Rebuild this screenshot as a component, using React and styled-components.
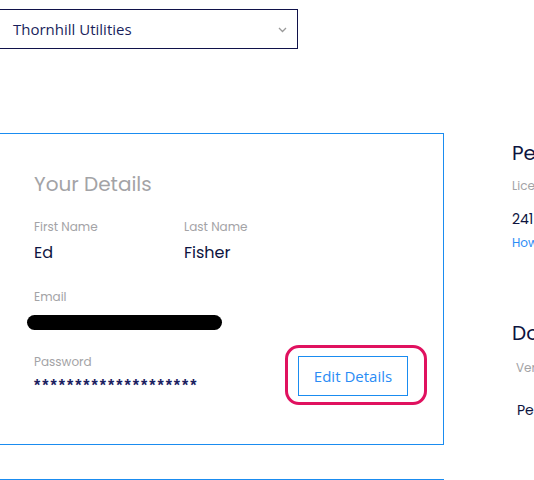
import React from "react";
import styled, { createGlobalStyle } from "styled-components";

const Global = createGlobalStyle`
  html, body { margin: 0; padding: 0; background: #fff; }
  body { font-family: "Open Sans", "Liberation Sans", sans-serif; overflow: hidden; }
`;

const Page = styled.div`
  width: 536px;
  height: 480px;
  overflow: hidden;
  display: flex;
  flex-direction: column;
  margin-left: -2px;
  & > * { flex-shrink: 0; }
`;

const SelectBox = styled.div`
  margin-top: 9px;
  width: 300px;
  height: 40px;
  box-sizing: border-box;
  border: 1px solid #10124a;
  display: flex;
  align-items: center;
  justify-content: space-between;
  padding: 0 10px 0 14px;
  font-family: "Open Sans", sans-serif;
  font-size: 15px;
  color: #1a1f5c;
`;

const Chevron = styled.svg`
  width: 9px;
  height: 6px;
  margin-top: 2px;
`;

const Columns = styled.div`
  margin-top: 84px;
  display: grid;
  grid-template-columns: 446px 1fr;
  column-gap: 68px;
`;

const LeftCol = styled.div`
  display: flex;
  flex-direction: column;
  gap: 34px;
`;

const Card = styled.div`
  box-sizing: border-box;
  border: 1px solid #1a8cf0;
  height: ${(p) => p.$h}px;
  padding: 38px 0 0 35px;
  font-family: "Poppins", "Lato", sans-serif;
`;

const Heading = styled.div`
  font-size: 20px;
  color: #a3a3a6;
  line-height: 24px;
  margin-bottom: 23px;
`;

const FieldRow = styled.div`
  display: grid;
  grid-template-columns: 150px 150px;
  margin-bottom: 26px;
`;

const Field = styled.div`
  display: flex;
  flex-direction: column;
`;

const Label = styled.div`
  font-size: 12px;
  line-height: 16px;
  color: #a3a3a6;
  margin-bottom: ${(p) => p.$mb ?? 8}px;
`;

const Value = styled.div`
  font-size: 16px;
  line-height: 20px;
  color: #0d1440;
`;

const Redaction = styled.div`
  margin-left: -7px;
  width: 195px;
  height: 15px;
  background: #000;
  border-radius: 8px;
  margin-bottom: 24px;
`;

const BottomRow = styled.div`
  display: flex;
  justify-content: space-between;
  align-items: flex-start;
  padding-right: 16px;
`;

const Stars = styled.div`
  font-family: "Liberation Sans", sans-serif;
  font-size: 16px;
  font-weight: 700;
  letter-spacing: 2px;
  line-height: 16px;
  color: #1a2060;
  margin-top: 2px;
`;

const Highlight = styled.div`
  margin-top: -9px;
  border: 3px solid #e0115f;
  border-radius: 14px;
  padding: 8px 16px 6px 10px;
`;

const EditButton = styled.button`
  display: block;
  width: 110px;
  height: 40px;
  box-sizing: border-box;
  background: #fff;
  border: 1px solid #1a8cf0;
  color: #2a8cf5;
  font-family: "Open Sans", sans-serif;
  font-size: 15px;
  cursor: pointer;
  padding: 0;
`;

const RightCol = styled.div`
  display: flex;
  flex-direction: column;
  font-family: "Poppins", "Lato", sans-serif;
  white-space: nowrap;
`;

const SideTitle = styled.div`
  font-size: 20px;
  line-height: 24px;
  color: #0d1440;
  margin-top: ${(p) => p.$mt}px;
  padding-left: ${(p) => p.$pl ?? 0}px;
`;

const SideLabel = styled.div`
  font-size: 12px;
  line-height: 16px;
  color: #a3a3a6;
  margin-top: ${(p) => p.$mt}px;
  padding-left: ${(p) => p.$pl ?? 0}px;
`;

const SideValue = styled.div`
  font-size: 14px;
  line-height: 18px;
  color: #0d1440;
  margin-top: ${(p) => p.$mt}px;
  padding-left: ${(p) => p.$pl ?? 0}px;
`;

const SideLink = styled.div`
  font-size: 12px;
  line-height: 16px;
  color: #2a8cf5;
  margin-top: ${(p) => p.$mt}px;
`;

export default function App() {
  return (
    <>
      <Global />
      <Page>
        <SelectBox>
          <span>Thornhill Utilities</span>
          <Chevron viewBox="0 0 9 6">
            <path d="M1 1 L4.5 4.5 L8 1" fill="none" stroke="#9a9a9a" strokeWidth="1.3" />
          </Chevron>
        </SelectBox>
        <Columns>
          <LeftCol>
            <Card $h={312}>
              <Heading>Your Details</Heading>
              <FieldRow>
                <Field>
                  <Label>First Name</Label>
                  <Value>Ed</Value>
                </Field>
                <Field>
                  <Label>Last Name</Label>
                  <Value>Fisher</Value>
                </Field>
              </FieldRow>
              <Label $mb={10}>Email</Label>
              <Redaction />
              <BottomRow>
                <Field>
                  <Label $mb={6}>Password</Label>
                  <Stars>********************</Stars>
                </Field>
                <Highlight>
                  <EditButton>Edit Details</EditButton>
                </Highlight>
              </BottomRow>
            </Card>
            <Card $h={60} />
          </LeftCol>
          <RightCol>
            <SideTitle $mt={8}>Personal Details</SideTitle>
            <SideLabel $mt={13}>Licence Number</SideLabel>
            <SideValue $mt={16}>241</SideValue>
            <SideLink $mt={7}>How do I find this?</SideLink>
            <SideTitle $mt={70}>Documents</SideTitle>
            <SideLabel $mt={15} $pl={4}>Version</SideLabel>
            <SideValue $mt={25} $pl={5}>Personal</SideValue>
          </RightCol>
        </Columns>
      </Page>
    </>
  );
}
